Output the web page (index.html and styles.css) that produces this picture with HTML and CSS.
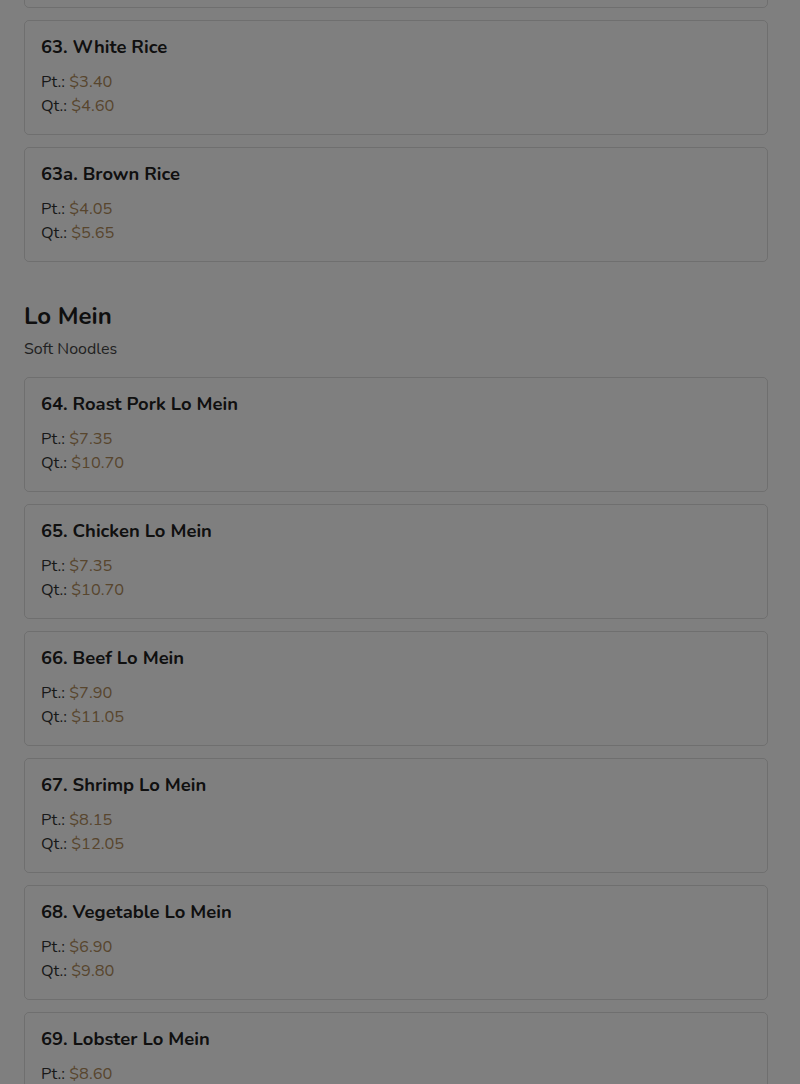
FILE: index.html
```html
<!DOCTYPE html>
<html lang="en">
<head>
<meta charset="utf-8">
<title>Menu</title>
<link rel="stylesheet" href="styles.css">
</head>
<body>
<main class="menu">
  <div class="card card-cut"></div>
  <div class="card">
    <h3 class="item-title">63. White Rice</h3>
    <div class="prices">
      <div class="price-row">Pt.: <span class="amount">$3.40</span></div>
      <div class="price-row">Qt.: <span class="amount">$4.60</span></div>
    </div>
  </div>
  <div class="card">
    <h3 class="item-title">63a. Brown Rice</h3>
    <div class="prices">
      <div class="price-row">Pt.: <span class="amount">$4.05</span></div>
      <div class="price-row">Qt.: <span class="amount">$5.65</span></div>
    </div>
  </div>

  <section class="section">
    <h2 class="section-title">Lo Mein</h2>
    <p class="section-sub">Soft Noodles</p>
  </section>

  <div class="card">
    <h3 class="item-title">64. Roast Pork Lo Mein</h3>
    <div class="prices">
      <div class="price-row">Pt.: <span class="amount">$7.35</span></div>
      <div class="price-row">Qt.: <span class="amount">$10.70</span></div>
    </div>
  </div>
  <div class="card">
    <h3 class="item-title">65. Chicken Lo Mein</h3>
    <div class="prices">
      <div class="price-row">Pt.: <span class="amount">$7.35</span></div>
      <div class="price-row">Qt.: <span class="amount">$10.70</span></div>
    </div>
  </div>
  <div class="card">
    <h3 class="item-title">66. Beef Lo Mein</h3>
    <div class="prices">
      <div class="price-row">Pt.: <span class="amount">$7.90</span></div>
      <div class="price-row">Qt.: <span class="amount">$11.05</span></div>
    </div>
  </div>
  <div class="card">
    <h3 class="item-title">67. Shrimp Lo Mein</h3>
    <div class="prices">
      <div class="price-row">Pt.: <span class="amount">$8.15</span></div>
      <div class="price-row">Qt.: <span class="amount">$12.05</span></div>
    </div>
  </div>
  <div class="card">
    <h3 class="item-title">68. Vegetable Lo Mein</h3>
    <div class="prices">
      <div class="price-row">Pt.: <span class="amount">$6.90</span></div>
      <div class="price-row">Qt.: <span class="amount">$9.80</span></div>
    </div>
  </div>
  <div class="card">
    <h3 class="item-title">69. Lobster Lo Mein</h3>
    <div class="prices">
      <div class="price-row">Pt.: <span class="amount">$8.60</span></div>
      <div class="price-row">Qt.: <span class="amount">$12.65</span></div>
    </div>
  </div>
</main>
<div class="backdrop"></div>
</body>
</html>
```
FILE: styles.css
```css
html, body {
  margin: 0;
  padding: 0;
  background: #ffffff;
  overflow: hidden;
}

body {
  font-family: "Nunito", "Lato", "Open Sans", sans-serif;
  color: #333333;
  font-size: 16px;
  line-height: 24px;
}

.menu {
  display: flex;
  flex-direction: column;
  gap: 12px;
  padding: 0 32px 0 24px;
  margin-top: -107px;
}

.card {
  border: 1px solid rgba(0, 0, 0, 0.13);
  border-radius: 5px;
  padding: 16px;
  height: 115px;
  box-sizing: border-box;
  display: flex;
  flex-direction: column;
}

.item-title {
  margin: 0;
  font-size: 18.4px;
  line-height: 20px;
  font-weight: 700;
  color: #212121;
}

.prices {
  margin-top: 13px;
  display: flex;
  flex-direction: column;
}

.price-row {
  color: #333333;
  font-size: 16.4px;
}

.amount {
  color: #b08c5c;
}

.section {
  padding-top: 26px;
  padding-bottom: 4px;
}

.section-title {
  margin: 0;
  font-size: 24px;
  line-height: 32px;
  font-weight: 700;
  color: #1e1e1e;
}

.section-sub {
  margin: 5px 0 0;
  font-size: 16px;
  line-height: 24px;
  color: #444444;
}

.backdrop {
  position: fixed;
  inset: 0;
  background: rgba(0, 0, 0, 0.5);
}
```
